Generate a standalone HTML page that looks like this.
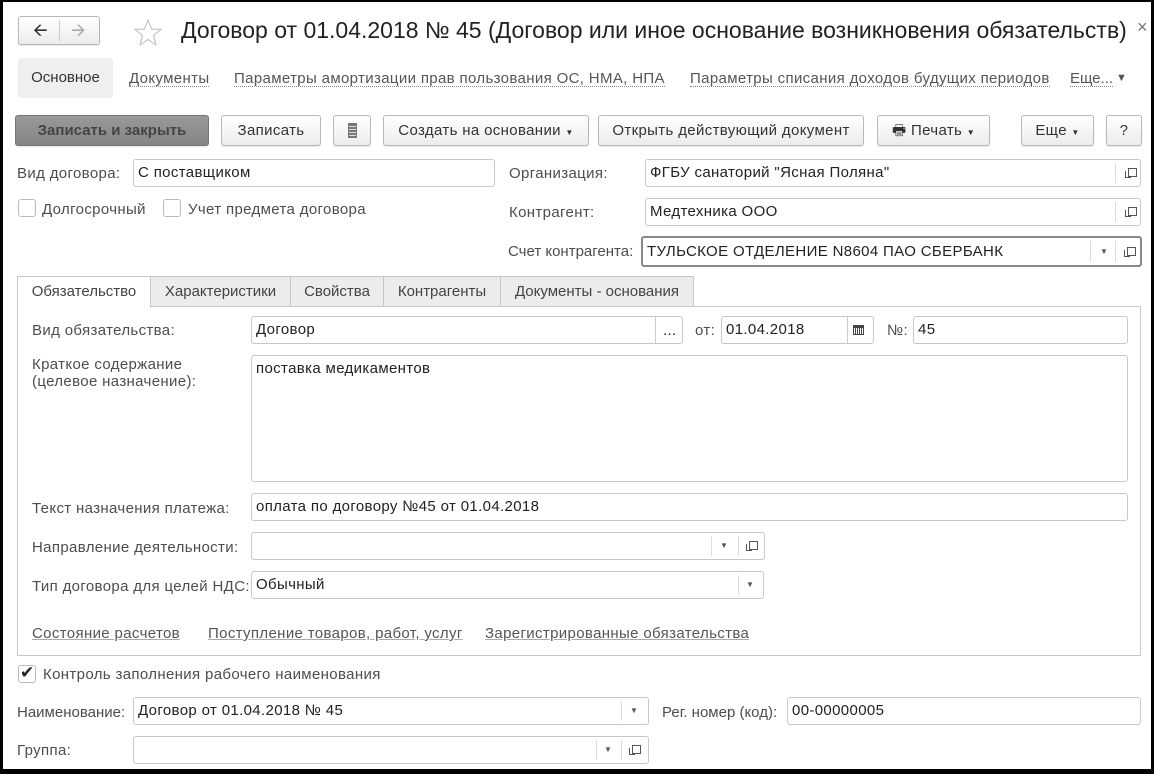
<!DOCTYPE html>
<html><head><meta charset="utf-8">
<style>
*{box-sizing:border-box;margin:0;padding:0}
body{width:1154px;height:774px;background:#000;position:relative;overflow:hidden;font-family:"Liberation Sans",Arial,sans-serif;font-size:15px;letter-spacing:0.35px;color:#333}
#w{position:absolute;left:3px;top:2px;width:1148px;height:767px;background:#fff}
.a{position:absolute;white-space:nowrap}
.lbl{position:absolute;white-space:nowrap;color:#4d4d4d;line-height:17px}
.inp{position:absolute;border:1px solid #c8c8c8;border-radius:3px;background:#fff;color:#222;padding-left:4px;line-height:26px;white-space:nowrap}
.btn{position:absolute;border:1px solid #b8b8b8;border-radius:3px;background:linear-gradient(#fff,#ececec);color:#333;text-align:center;line-height:29px;box-shadow:0 1px 1px rgba(0,0,0,.1)}
.lnk{position:absolute;white-space:nowrap;color:#555;border-bottom:1px dotted #888;line-height:15px}
.ulnk{position:absolute;white-space:nowrap;color:#555;text-decoration:underline;text-decoration-color:#aaa}
.div{position:absolute;top:3px;bottom:3px;width:1px;background:#ddd}
.cb{position:absolute;width:18px;height:18px;border:1px solid #bbb;border-radius:3px;background:#fff}
.tab{position:absolute;top:274px;height:31px;border:1px solid #c8c8c8;background:#ececec;line-height:29px;text-align:center;color:#444;letter-spacing:0}
.dd{position:absolute;font-size:8px;color:#555}
.cp{position:absolute;width:9px;height:9px;border:1px solid #555}
.cp:before{content:"";position:absolute;left:-4px;top:2px;width:5px;height:6px;border-left:1px solid #555;border-bottom:1px solid #555}
</style></head><body>
<div id="w">
<div class="btn" style="left:15px;top:14px;width:82px;height:29px;line-height:26px;font-size:18px">
<span style="position:absolute;left:14px;top:0;color:#333">&#129128;</span>
<span style="position:absolute;left:40px;top:3px;bottom:3px;width:1px;background:#ccc"></span>
<span style="position:absolute;left:52px;top:0;color:#aaa">&#129130;</span></div>
<svg class="a" style="left:130px;top:16px" width="30" height="30" viewBox="0 0 30 30"><polygon points="15,2 18.5,11 28,11.5 20.5,17.5 23,27 15,21.5 7,27 9.5,17.5 2,11.5 11.5,11" fill="none" stroke="#bbb" stroke-width="1"/></svg>
<div class="a" style="left:178px;top:15px;font-size:23px;color:#222;letter-spacing:0">Договор от 01.04.2018 № 45 (Договор или иное основание возникновения обязательств)</div>
<div class="a" style="left:1134px;top:15px;font-size:18px;color:#777">×</div>
<div class="a" style="left:15px;top:56px;width:95px;height:40px;background:#efefef;border-radius:3px;line-height:40px;text-align:center;color:#333;letter-spacing:0">Основное</div>
<div class="lnk" style="left:126px;top:69px">Документы</div>
<div class="lnk" style="left:231px;top:69px">Параметры амортизации прав пользования ОС, НМА, НПА</div>
<div class="lnk" style="left:687px;top:69px">Параметры списания доходов будущих периодов</div>
<div class="lnk" style="left:1067px;top:69px;letter-spacing:0">Еще...</div>
<div class="a" style="left:1113px;top:70px;font-size:11px;color:#555">▼</div>
<div class="btn" style="left:12px;top:113px;width:194px;height:31px;background:linear-gradient(#999,#858585);border-color:#777;color:#444;font-weight:bold;letter-spacing:0">Записать и закрыть</div>
<div class="btn" style="left:218px;top:113px;width:100px;height:31px">Записать</div>
<div class="btn" style="left:330px;top:113px;width:38px;height:31px"><span style="display:inline-block;width:9px;height:15px;margin-top:7px;background:repeating-linear-gradient(#777 0 2px,#ddd 2px 3px);border:1px solid #777"></span></div>
<div class="btn" style="left:380px;top:113px;width:206px;height:31px">Создать на основании <span style="font-size:8px">▼</span></div>
<div class="btn" style="left:595px;top:113px;width:266px;height:31px">Открыть действующий документ</div>
<div class="btn" style="left:874px;top:113px;width:113px;height:31px"><span style="font-size:15px">🖶</span> Печать <span style="font-size:8px">▼</span></div>
<div class="btn" style="left:1018px;top:113px;width:73px;height:31px">Еще <span style="font-size:8px">▼</span></div>
<div class="btn" style="left:1103px;top:113px;width:36px;height:31px">?</div>
<div class="lbl" style="left:14px;top:163px">Вид договора:</div>
<div class="inp" style="left:130px;top:157px;width:362px;height:28px">С поставщиком</div>
<div class="cb" style="left:15px;top:197px"></div><div class="lbl" style="left:39px;top:199px">Долгосрочный</div>
<div class="cb" style="left:160px;top:197px"></div><div class="lbl" style="left:185px;top:199px">Учет предмета договора</div>
<div class="lbl" style="left:506px;top:163px">Организация:</div>
<div class="inp" style="left:642px;top:157px;width:496px;height:28px">ФГБУ санаторий "Ясная Поляна"<span class="div" style="left:469px"></span><span class="cp" style="left:482px;top:8px"></span></div>
<div class="lbl" style="left:506px;top:202px">Контрагент:</div>
<div class="inp" style="left:642px;top:196px;width:496px;height:28px">Медтехника ООО<span class="div" style="left:469px"></span><span class="cp" style="left:482px;top:8px"></span></div>
<div class="lbl" style="left:505px;top:241px;letter-spacing:0">Счет контрагента:</div>
<div class="inp" style="left:638px;top:234px;width:501px;height:31px;border:2px solid #888;line-height:27px">ТУЛЬСКОЕ ОТДЕЛЕНИЕ N8604 ПАО СБЕРБАНК<span class="div" style="left:447px"></span><span class="dd" style="left:457px;top:0">▼</span><span class="div" style="left:472px"></span><span class="cp" style="left:484px;top:9px"></span></div>
<div class="a" style="left:14px;top:304px;width:1124px;height:350px;border:1px solid #c8c8c8"></div>
<div class="tab" style="left:14px;width:134px;background:#fff;border-bottom-color:#fff;height:32px">Обязательство</div>
<div class="tab" style="left:147px;width:141px">Характеристики</div>
<div class="tab" style="left:287px;width:94px">Свойства</div>
<div class="tab" style="left:380px;width:118px">Контрагенты</div>
<div class="tab" style="left:497px;width:194px">Документы - основания</div>
<div class="lbl" style="left:29px;top:320px">Вид обязательства:</div>
<div class="inp" style="left:248px;top:314px;width:432px;height:28px">Договор<span class="div" style="left:403px;top:0;bottom:0;background:#ccc"></span><span class="a" style="left:411px;top:1px">...</span></div>
<div class="lbl" style="left:692px;top:320px">от:</div>
<div class="inp" style="left:718px;top:314px;width:153px;height:28px">01.04.2018<span class="div" style="left:125px;top:0;bottom:0;background:#ccc"></span><span class="a" style="left:131px;top:8px;width:11px;height:10px;border:1px solid #444;border-top-width:3px;background:repeating-linear-gradient(90deg,#fff 0 1px,#444 1px 2px)"></span></div>
<div class="lbl" style="left:884px;top:320px">№:</div>
<div class="inp" style="left:910px;top:314px;width:215px;height:28px">45</div>
<div class="lbl" style="left:29px;top:354px">Краткое содержание<br>(целевое назначение):</div>
<div class="inp" style="left:248px;top:353px;width:877px;height:127px;line-height:20px;padding-top:3px">поставка медикаментов</div>
<div class="lbl" style="left:29px;top:498px">Текст назначения платежа:</div>
<div class="inp" style="left:248px;top:491px;width:877px;height:28px">оплата по договору №45 от 01.04.2018</div>
<div class="lbl" style="left:29px;top:537px">Направление деятельности:</div>
<div class="inp" style="left:248px;top:530px;width:514px;height:28px"><span class="div" style="left:459px"></span><span class="dd" style="left:468px;top:0">▼</span><span class="div" style="left:486px"></span><span class="cp" style="left:497px;top:8px"></span></div>
<div class="lbl" style="left:29px;top:576px">Тип договора для целей НДС:</div>
<div class="inp" style="left:248px;top:569px;width:513px;height:28px">Обычный<span class="div" style="left:486px"></span><span class="dd" style="left:494px;top:0">▼</span></div>
<div class="ulnk" style="left:29px;top:623px">Состояние расчетов</div>
<div class="ulnk" style="left:205px;top:623px">Поступление товаров, работ, услуг</div>
<div class="ulnk" style="left:482px;top:623px">Зарегистрированные обязательства</div>
<div class="cb" style="left:15px;top:663px"><span class="a" style="left:1px;top:-3px;font-size:17px;color:#222">✔</span></div>
<div class="lbl" style="left:40px;top:664px">Контроль заполнения рабочего наименования</div>
<div class="lbl" style="left:14px;top:702px;letter-spacing:0">Наименование:</div>
<div class="inp" style="left:130px;top:695px;width:516px;height:28px">Договор от 01.04.2018 № 45<span class="div" style="left:487px"></span><span class="dd" style="left:496px;top:0">▼</span></div>
<div class="lbl" style="left:659px;top:702px;letter-spacing:0">Рег. номер (код):</div>
<div class="inp" style="left:784px;top:695px;width:354px;height:28px">00-00000005</div>
<div class="lbl" style="left:14px;top:740px">Группа:</div>
<div class="inp" style="left:130px;top:734px;width:516px;height:28px"><span class="div" style="left:462px"></span><span class="dd" style="left:470px;top:0">▼</span><span class="div" style="left:487px"></span><span class="cp" style="left:498px;top:8px"></span></div>
</div>
</body></html>
